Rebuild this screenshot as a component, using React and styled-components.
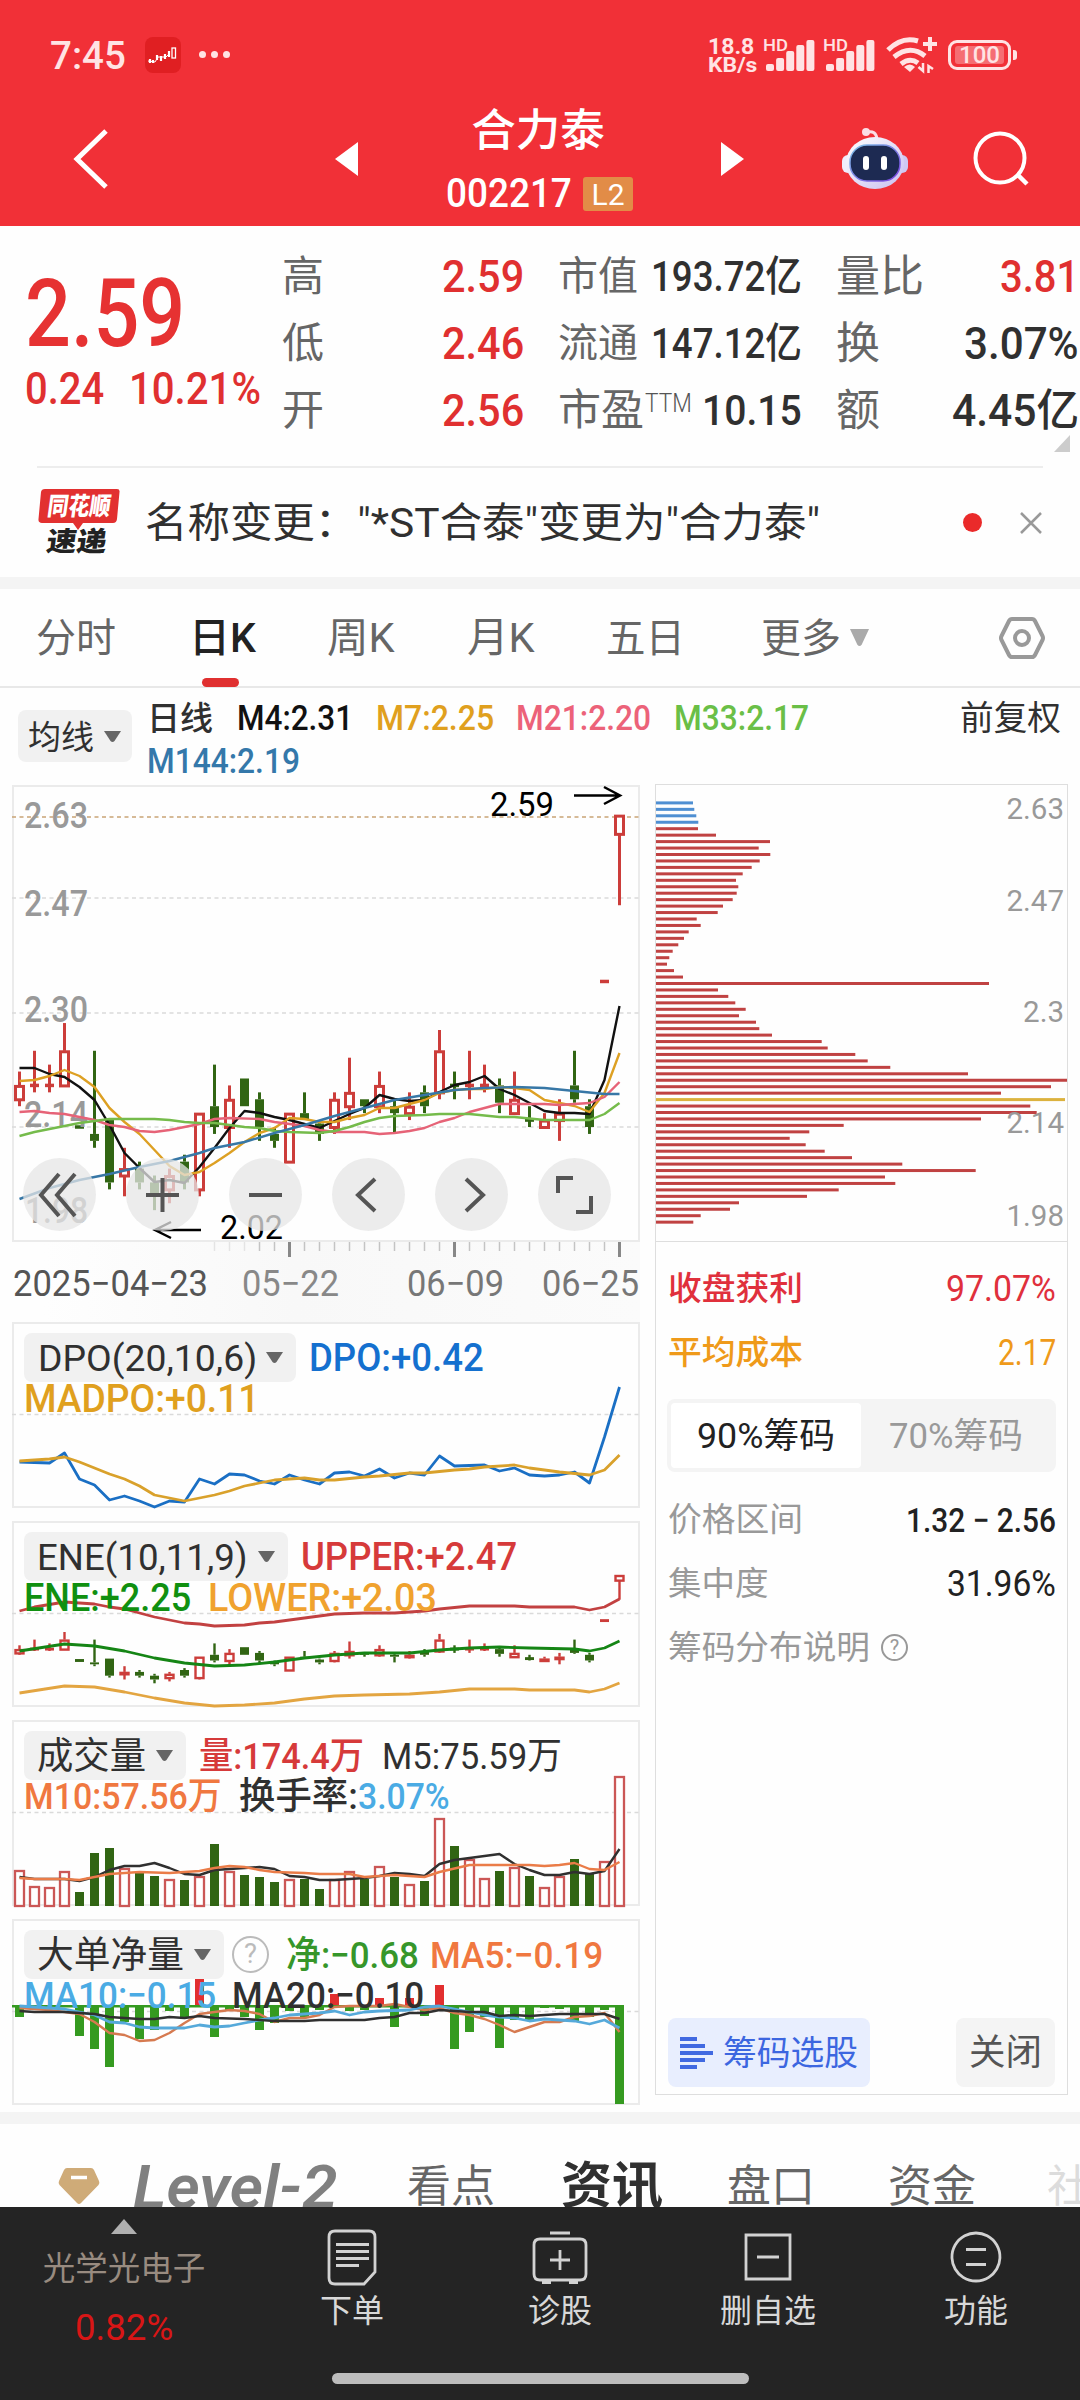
//-----------------------------------------------------------------------------
// Imports
//-----------------------------------------------------------------------------
import React, { useLayoutEffect, useRef, useState } from 'react'
import styled, { createGlobalStyle } from 'styled-components'

//-----------------------------------------------------------------------------
// Config
//-----------------------------------------------------------------------------
const colors = {
  BRAND: '#f13037',
  RISE: '#e03030',
  TEXT: '#303030',
  LABEL: '#666',
  CANDLE_UP: '#cc3d3a',
  CANDLE_DOWN: '#316513',
  GOLD: '#e0a01e',
  BLUE: '#1a6fc4',
  ORANGE: '#f07840',
  SKY: '#4aabe4',
  BORDER: '#ebebeb'
}

const FONT = 'Roboto, "Noto Sans CJK SC", sans-serif'

//-----------------------------------------------------------------------------
// Data
//-----------------------------------------------------------------------------
// [up, high, body top, body bottom, low] in cents
const CANDLES = [
  [1, 222, 220, 218, 217], [1, 225, 220, 220, 219], [1, 223, 220, 220, 219],
  [1, 229, 225, 220, 220], [0, 214, 214, 214, 214], [0, 225, 213, 212, 211],
  [0, 215, 215, 206, 205], [1, 211, 208, 207, 204], [0, 209, 208, 206, 205],
  [0, 207, 206, 204, 202], [1, 208, 207, 205, 203], [0, 210, 209, 206, 205],
  [1, 216, 216, 205, 204], [0, 223, 217, 214, 213], [1, 220, 218, 214, 211],
  [0, 221, 221, 217, 217], [0, 219, 218, 214, 212], [0, 214, 213, 212, 211],
  [1, 216, 216, 209, 209], [0, 219, 216, 215, 215], [0, 215, 214.5, 213, 212],
  [1, 219, 218, 214, 213], [1, 224, 219, 217, 215], [0, 218, 218, 217, 216],
  [1, 222, 220, 217, 216], [0, 218, 217, 216, 213], [1, 219, 217, 216, 215],
  [0, 220, 219, 217, 216], [1, 228, 225, 219, 218], [0, 222, 220, 220, 218],
  [1, 225, 220, 220, 218], [1, 223, 220, 220, 219], [0, 221, 220, 217.5, 216],
  [1, 222, 218, 216, 216], [0, 217, 215, 215, 214], [1, 216, 215, 214, 214],
  [1, 218, 216, 215, 212], [0, 225, 220, 218, 217.5], [0, 218, 217, 214, 213],
  [1, 235, 235, 235, 235], [1, 259, 259, 256.3, 246]
]

// sparse series: "index:y"
const MA4 = '0:283 1:283 2:289 3:292 4:302 5:315 6:340 7:368 8:383 9:397 10:395 11:398 12:382 13:363 14:343 15:326 16:328 17:332 18:335 19:339 20:343 21:336 22:329 23:323 24:310 25:314 26:316 27:315 28:307 29:300 30:297 31:291 32:304 33:310 34:318 35:326 36:328 37:328 38:329 39:295 40:221'
const MA7 = '0:296 1:295 2:291 3:285 4:291 5:302 6:323 7:337 8:349 9:365 10:381 11:390 12:387 13:378 14:368 15:357 16:348 17:343 18:333 19:334 20:337 21:337 22:333 23:330 24:323 25:323 26:319 27:315 28:308 29:305 30:304 31:304 32:302 33:303 34:305 35:315 36:318 37:321 38:327 39:308 40:268'
const MA21 = '0:327 1:326 2:328 3:329 4:332 5:335 6:340 7:342 8:346 9:347 10:345 11:342 12:339 13:334 14:333 16:334 17:337 18:339 19:341 20:345 21:347 23:347 24:349 25:348 26:346 27:343 28:337 29:333 30:327 31:323 32:319 33:319 35:319 36:320 37:319 38:318 39:312 40:297'
const MA33 = '0:351 1:347 2:344 3:341 4:338 5:336 6:334 7:334 9:334 10:335 11:337 12:338 13:338 14:340 15:342 16:343 17:346 18:347 20:348 21:346 22:342 23:337 24:333 25:331 27:330 28:329 30:329 32:332 33:332 35:335 36:335 38:335 39:329 40:318'
const MA144 = '0:414 2:403 4:395 6:389 8:382 10:376 12:368 13:363 15:357 17:348 19:340 21:331 23:323 25:315 27:310 29:305 31:303 33:302 35:303 37:306 39:309 40:309'

const DPO = '0:140 2:141 3:131 4:157 5:163 6:178 7:174 8:179 9:185 10:179 11:180 12:157 13:162 14:152 15:153 16:159 17:162 18:153 19:158 20:162 21:151 22:150 23:154 24:147 25:156 26:151 27:153 28:134 29:144 31:143 32:149 33:146 34:153 35:154 36:153 37:150 38:161 39:115 40:65'
const MADPO = '0:139 2:137 3:135 4:140 5:146 6:152 7:157 8:164 9:173 11:179 12:176 13:173 14:169 15:164 16:161 17:158 19:156 20:158 21:158 23:155 24:154 26:151 27:151 29:148 30:147 31:145 33:143 34:146 36:150 38:153 39:148 40:133'

const UPPER = '0:90 1:86 3:81 5:83 6:86 7:88 8:92 9:96 11:102 12:103 13:105 15:104 16:102 17:101 19:97 21:93 23:92 25:92 27:90 28:88 30:85 31:85 33:85 34:86 37:86 38:89 39:86 40:78'
const ENE = '0:130 3:123 5:125 7:130 9:137 11:142 13:145 15:144 17:141 19:137 21:134 23:132 26:132 28:129 30:127 32:126 34:127 37:128 38:130 39:127 40:120'
const LOWER = '0:172 3:165 5:166 7:171 9:177 11:182 13:185 15:184 17:182 19:178 21:175 23:174 26:173 28:171 30:168 33:168 34:169 37:169 38:171 39:168 40:162'

const VOLUMES = [36, 20, 19, 35, 14, 53, 58, 38, 33, 30, 27, 26, 30, 62, 35, 31, 29, 24, 27, 27, 17, 27, 35, 27, 40, 29, 22, 25, 88, 60, 47, 28, 35, 39, 30, 19, 30, 47, 32, 45, 130]
const VOL5 = '0:157 1:159 3:159 4:161 5:157 6:150 7:146 8:146 9:143 10:148 11:154 12:155 13:150 14:149 16:147 17:149 18:156 19:157 20:160 21:160 22:159 23:158 24:156 25:153 26:154 27:156 28:144 29:140 30:138 31:136 32:134 33:144 34:150 35:155 36:155 37:152 38:154 39:151 40:129'
const VOL10 = '0:158 1:159 3:159 4:160 5:157 6:154 8:152 10:153 12:151 13:148 14:146 15:147 16:150 17:152 19:153 20:154 22:154 23:157 24:156 25:155 26:156 27:157 28:152 30:145 32:145 34:145 35:146 36:145 37:143 38:149 39:150 40:142'

const NETS = [-11, -1, -1, -1, -30, -43, -61, -16, -33, -24, -5, -11, 31, -31, -5, -11, -24, -17, -5, -11, -4, 11, -5, -4, 7, -21, 7, -10, 20, -43, -26, -11, -42, -14, -15, -2, -3, -16, -11, -4, -98]
const NET5 = '0:89 2:91 3:93 4:95 5:103 6:114 7:116 8:122 9:121 10:114 11:104 12:95 13:93 14:91 15:92 16:95 17:103 18:99 19:99 20:96 21:88 22:87 24:87 25:85 26:88 27:91 28:89 29:94 30:96 31:100 32:106 33:113 34:108 35:103 36:103 37:98 38:97 39:94 40:113'
const NET10 = '0:87 3:90 4:93 5:96 6:103 7:104 8:108 9:109 11:109 12:106 13:108 14:107 15:104 16:101 17:99 18:96 19:95 20:94 21:92 22:96 23:93 24:92 26:91 27:88 28:87 29:90 30:93 31:96 32:98 33:99 34:102 35:100 37:102 38:105 39:101 40:109'
const NET20 = '0:92 1:93 3:93 4:94 5:95 6:98 8:100 9:100 10:98 11:99 12:97 13:99 15:100 17:102 19:102 20:101 23:101 24:99 25:98 26:94 27:94 28:91 29:92 30:93 31:93 32:97 33:96 34:97 36:95 39:95 40:100'

const CHIPS = [37, 38.3, 40.3, 42.3, 42, 60, 114, 102.7, 114.3, 103.7, 95.7, 86.7, 80, 82.3, 80.7, 76.7, 67, 61.7, 40.7, 44.7, 32.7, 28, 22.3, 16.7, 13.3, 11, 18, 27, 333, 62, 72.3, 79.3, 89.7, 83, 100, 103.3, 116, 165.7, 171.7, 199.3, 211.7, 234.3, 312, 411, 395, 345, 409, 374.3, 380.7, 325, 187.7, 153.3, 133.7, 149.7, 168.7, 196, 246.3, 319.7, 229, 239.3, 182.7, 151, 83, 74, 44.7, 37.3]

//-----------------------------------------------------------------------------
// Helpers
//-----------------------------------------------------------------------------
const x = i => 19.5 + 15 * i

const points = series =>
  series.split(' ').map(p => {
    const [i, y] = p.split(':')
    return `${ x(+i) },${ y }`
  }).join(' ')

// Squeezes or stretches its text horizontally to a fixed width
const Fit = ({ children, color, ml, size, w, weight }) => {
  const ref = useRef(null)
  const [scale, setScale] = useState(1)
  useLayoutEffect(() => {
    if (ref.current) setScale(w / ref.current.offsetWidth)
  }, [w, children])
  return (
    <FitBox $color={color} $ml={ml} $size={size} $w={w} $weight={weight}>
      <FitText ref={ref} style={{ transform: `scaleX(${ scale })` }}>{children}</FitText>
    </FitBox>
  )
}

//-----------------------------------------------------------------------------
// Chart parts
//-----------------------------------------------------------------------------
const Line = ({ color, series, width = 2.4 }) =>
  <polyline points={points(series)} fill='none' stroke={color} strokeWidth={width} strokeLinejoin='round' />

const Candles = ({ thick = 3, toY }) => CANDLES.map(([up, high, top, bottom, low], i) => {
  const color = up ? colors.CANDLE_UP : colors.CANDLE_DOWN
  const [h, t, b, l] = [high, top, bottom, low].map(toY)
  const flat = b - t < 1
  return (
    <g key={i} stroke={color} strokeWidth={thick}>
      {t > h && <line x1={x(i)} x2={x(i)} y1={h} y2={t} />}
      {l > b && <line x1={x(i)} x2={x(i)} y1={b} y2={l} />}
      {flat && <line x1={x(i) - 4.5} x2={x(i) + 4.5} y1={t} y2={t} strokeWidth={thick + 0.5} />}
      {!flat && up === 1 && <rect x={x(i) - 4} y={t + 1} width='8' height={Math.max(b - t - 0.5, 1)} fill='#fff' />}
      {!flat && up === 0 && <rect x={x(i) - 4.5} y={t} width='9' height={b - t} fill={color} stroke='none' />}
    </g>
  )
})

const Grid = ({ color = '#dadada', y }) =>
  <line x1='12' x2='640' y1={y} y2={y} stroke={color} strokeWidth='1.5' strokeDasharray='4 3.5' />

const ChartLabel = ({ children, color = '#999', size = 37, w, weight = 500, x: left, y }) =>
  <text x={left} y={y} fontSize={size} fontWeight={weight} fill={color} fontFamily={FONT} textLength={w} lengthAdjust='spacingAndGlyphs'>{children}</text>

const Caret = ({ color = '#666', h = 11, w = 17 }) =>
  <svg width={w} height={h} viewBox='0 0 17 11' preserveAspectRatio='none'><path d='M0 0H17L10.5 10Q8.500 12 6.500 10Z' fill={color} /></svg>

const Help = ({ color = '#bbb', size }) => (
  <HelpMark $color={color} $size={size}>?</HelpMark>
)

//-----------------------------------------------------------------------------
// Status bar and navigation
//-----------------------------------------------------------------------------
const Signal = () => (
  <svg width='52' height='38' viewBox='0 0 52 38'>
    <text x='0' y='14' fontSize='17' fontWeight='500' fill='#ffe3e4' fontFamily={FONT} textLength='25' lengthAdjust='spacingAndGlyphs'>HD</text>
    {[7, 13, 20, 26, 31].map((h, i) => (
      <rect key={i} x={3 + i * 10.1} y={34 - h} width='8' height={h} rx='2' fill='#ffe3e4' />
    ))}
  </svg>
)

const StatusBar = () => (
  <Status>
    <Fit size={39} w={76} ml={50}>7:45</Fit>
    <AppIcon>
      <svg width='36' height='36' viewBox='0 0 36 36'>
        <path d='M5 22V26M8 23V26M12 18V23M16 19V24M20 17V22M24 14V20' stroke='#fff' strokeWidth='2.200' />
        <path d='M3 24L10 25L13 20L21 20L25 16' stroke='#fff' strokeWidth='1' fill='none' />
        <rect x='27' y='11' width='3.500' height='10' fill='none' stroke='#fff' strokeWidth='1.300' />
      </svg>
    </AppIcon>
    <Dots><i /><i /><i /></Dots>
    <Speed>
      <Fit size={22} w={46} weight={700}>18.8</Fit>
      <Fit size={21} w={49} weight={700}>KB/s</Fit>
    </Speed>
    <Signals><Signal /><Signal /></Signals>
    <svg width='54' height='40' viewBox='884 34 54 40'>
      <g fill='none' stroke='#ffe3e4' strokeWidth='5'>
        <path d='M888 49Q902 35 918 40' />
        <path d='M894 56Q910 43 925 55' />
        <path d='M901 63Q910 56 918 62' />
        <path d='M923 43H937M930 36V50' strokeWidth='4' />
        <path d='M923 62V70L918.500 66M928.500 72V65L933 68' strokeWidth='2.500' />
      </g>
      <path d='M904 66Q910 61 915 66L910 71Z' fill='#ffe3e4' />
    </svg>
    <Battery><span>100</span></Battery>
    <BatteryTip />
  </Status>
)

const Robot = () => (
  <svg width='68' height='64' viewBox='0 0 68 64'>
    <defs>
      <linearGradient id='shell' x1='0' y1='0' x2='1' y2='1'>
        <stop offset='0' stopColor='#fff' /><stop offset='1' stopColor='#c9bff0' />
      </linearGradient>
      <linearGradient id='rim' x1='0' y1='0' x2='1' y2='1'>
        <stop offset='0' stopColor='#7fc4e8' /><stop offset='1' stopColor='#7a3fe0' />
      </linearGradient>
    </defs>
    <circle cx='25' cy='5' r='4' fill='#fbdde6' />
    <path d='M26 5Q35 3 36 12' fill='none' stroke='#fbdde6' strokeWidth='3' />
    <rect x='1' y='28' width='12' height='18' rx='6' fill='#f0ecfc' />
    <rect x='55' y='28' width='12' height='18' rx='6' fill='#cfc8f2' />
    <ellipse cx='34' cy='36' rx='29' ry='26' fill='url(#shell)' />
    <rect x='9' y='18' width='50' height='36' rx='17' fill='#1d2a52' stroke='url(#rim)' strokeWidth='1.500' />
    <rect x='22' y='29' width='6' height='14' rx='3' fill='#fff' />
    <rect x='40' y='29' width='6' height='14' rx='3' fill='#fff' />
  </svg>
)

const NavBar = () => (
  <Nav>
    <BackIcon width='36' height='62' viewBox='0 0 36 62'>
      <path d='M33 3L4 31L33 59' fill='none' stroke='#fff' strokeWidth='5' />
    </BackIcon>
    <PrevIcon width='23' height='34' viewBox='0 0 23 34'><path d='M23 0V34L0 17Z' fill='#fff' /></PrevIcon>
    <TitleBlock>
      <StockName>合力泰</StockName>
      <CodeRow>
        <Fit size={41} w={126}>002217</Fit>
        <LevelBadge><Fit size={30} w={33} weight={400}>L2</Fit></LevelBadge>
      </CodeRow>
    </TitleBlock>
    <svg width='23' height='34' viewBox='0 0 23 34'><path d='M0 0V34L23 17Z' fill='#fff' /></svg>
    <RobotSlot><Robot /></RobotSlot>
    <SearchIcon width='60' height='58' viewBox='0 0 60 58'>
      <circle cx='28' cy='28' r='24.500' fill='none' stroke='#fff' strokeWidth='4' />
      <path d='M45 44L55 54' stroke='#fff' strokeWidth='4.500' />
    </SearchIcon>
  </Nav>
)

//-----------------------------------------------------------------------------
// Quote
//-----------------------------------------------------------------------------
const QuoteBoard = () => (
  <Quote>
    <PriceBlock>
      <Fit size={95} w={160} color='#e63232'>2.59</Fit>
      <ChangeRow>
        <Fit size={45} w={79} color={colors.RISE}>0.24</Fit>
        <Fit size={45} w={132} ml={25} color={colors.RISE}>10.21%</Fit>
      </ChangeRow>
    </PriceBlock>
    <QuoteColumn $w={242}>
      <QuoteRow><QuoteLabel>高</QuoteLabel><Fit size={45} w={82} color={colors.RISE}>2.59</Fit></QuoteRow>
      <QuoteRow><QuoteLabel>低</QuoteLabel><Fit size={45} w={82} color={colors.RISE}>2.46</Fit></QuoteRow>
      <QuoteRow><QuoteLabel>开</QuoteLabel><Fit size={45} w={82} color={colors.RISE}>2.56</Fit></QuoteRow>
    </QuoteColumn>
    <QuoteColumn $w={244} $ml={34}>
      <QuoteRow><QuoteLabel $size={40}>市值</QuoteLabel><Fit size={42} w={151}>193.72亿</Fit></QuoteRow>
      <QuoteRow><QuoteLabel $size={40}>流通</QuoteLabel><Fit size={42} w={151}>147.12亿</Fit></QuoteRow>
      <QuoteRow><QuoteLabel $size={43}>市盈</QuoteLabel><Sup><Fit size={25} w={47} weight={300} color='#555'>TTM</Fit></Sup><Fit size={43} w={100}>10.15</Fit></QuoteRow>
    </QuoteColumn>
    <QuoteColumn $w={243} $ml={34}>
      <QuoteRow><QuoteLabel $size={44}>量比</QuoteLabel><Fit size={45} w={79} color={colors.RISE}>3.81</Fit></QuoteRow>
      <QuoteRow><QuoteLabel $size={44}>换</QuoteLabel><Fit size={44} w={115}>3.07%</Fit></QuoteRow>
      <QuoteRow><QuoteLabel $size={44}>额</QuoteLabel><Fit size={44} w={127}>4.45亿</Fit></QuoteRow>
      <Corner />
    </QuoteColumn>
  </Quote>
)

const NoticeBar = () => (
  <Notice>
    <svg width='86' height='70' viewBox='36 488 86 70'>
      <path d='M45 489H117Q120 489 119.500 492L117 519Q116.500 523 113 523H83L78 530L73 523H42Q38 523 38.500 519L41 492Q41.500 489 45 489Z' fill='#e23030' />
      <g fontFamily={FONT} fontWeight='900' transform='skewX(-8)'>
        <text x='119' y='515' fontSize='25' fill='#fff' textLength='63' lengthAdjust='spacingAndGlyphs'>同花顺</text>
        <text x='123' y='551' fontSize='27' fill='#222' textLength='60' lengthAdjust='spacingAndGlyphs'>速递</text>
      </g>
    </svg>
    <Fit size={41} w={675} ml={23} weight={400}>{'名称变更："*ST合泰"变更为"合力泰"'}</Fit>
    <NoticeDot />
    <svg width='24' height='24' viewBox='0 0 24 24'><path d='M2 2L22 22M22 2L2 22' stroke='#999' strokeWidth='2.500' /></svg>
  </Notice>
)

//-----------------------------------------------------------------------------
// Period tabs and averages
//-----------------------------------------------------------------------------
const PeriodTabs = () => (
  <Tabs>
    <Fit size={40} w={80} ml={36} weight={400} color='#666'>分时</Fit>
    <ActiveTab><Fit size={41} w={67} color='#222'>日K</Fit></ActiveTab>
    <Fit size={41} w={68} ml={71} weight={400} color='#666'>周K</Fit>
    <Fit size={41} w={68} ml={72} weight={400} color='#666'>月K</Fit>
    <Fit size={40} w={79} ml={71} weight={400} color='#666'>五日</Fit>
    <Fit size={40} w={80} ml={76} weight={400} color='#666'>更多</Fit>
    <MoreCaret><Caret color='#aaa' w={19} h={17} /></MoreCaret>
    <GearIcon width='46' height='44' viewBox='0 0 46 44'>
      <path d='M13 3H33Q35 3 36 5L43.500 20Q44.500 22 43.500 24L36 39Q35 41 33 41H13Q11 41 10 39L2.500 24Q1.500 22 2.500 20L10 5Q11 3 13 3Z' fill='none' stroke='#999' strokeWidth='4' />
      <circle cx='23' cy='22' r='7' fill='none' stroke='#999' strokeWidth='4' />
    </GearIcon>
  </Tabs>
)

const Averages = () => (
  <AverageBar>
    <AverageButton><Fit size={33} w={66} weight={400}>均线</Fit><Caret /></AverageButton>
    <AverageLines>
      <LegendRow>
        <Fit size={33} w={66}>日线</Fit>
        <Fit size={35} w={116} ml={24} color='#111'>M4:2.31</Fit>
        <Fit size={35} w={118} ml={23} color='#e0a01e'>M7:2.25</Fit>
        <Fit size={35} w={135} ml={22} color='#ec6279'>M21:2.20</Fit>
        <Fit size={35} w={135} ml={23} color='#6abf47'>M33:2.17</Fit>
      </LegendRow>
      <LegendRow><Fit size={35} w={153} color='#3478aa'>M144:2.19</Fit></LegendRow>
    </AverageLines>
    <Fit size={34} w={101} weight={400}>前复权</Fit>
  </AverageBar>
)

//-----------------------------------------------------------------------------
// Main chart
//-----------------------------------------------------------------------------
const mainY = cents => 342 + (214 - cents) * 6.93

const TOOL_ICONS = [
  'M36 16L18 37L36 58M52 16L34 37L52 58',
  'M20 37H53M36.500 20V54',
  'M20 37H53',
  'M43 21L26 37L43 53',
  'M31 21L48 37L31 53',
  'M20 35V20H35M53 38V54H38'
]

const MainChart = () => (
  <ChartBox $h={457}>
    <svg width='628' height='457' viewBox='12 0 628 457'>
      <Grid y={32} color='#c9a476' />
      <Grid y={113} /><Grid y={228} /><Grid y={342} />
      <Candles toY={mainY} />
      <ChartLabel x={24} y={43} w={64}>2.63</ChartLabel>
      <ChartLabel x={24} y={131} w={64}>2.47</ChartLabel>
      <ChartLabel x={24} y={237} w={64}>2.30</ChartLabel>
      <ChartLabel x={24} y={342} w={64}>2.14</ChartLabel>
      <ChartLabel x={25} y={438} w={63}>1.98</ChartLabel>
      <Line series={MA4} color='#111' />
      <Line series={MA7} color='#dda023' />
      <Line series={MA21} color='#e66377' />
      <Line series={MA33} color='#75bb4b' />
      <Line series={MA144} color='#3777a6' />
      <ChartLabel x={490} y={31} w={64} size={33} weight={400} color='#000'>2.59</ChartLabel>
      <ChartLabel x={220} y={454} w={63} size={33} weight={400} color='#000'>2.02</ChartLabel>
      <path d='M574 10.500H619M604 2L620 10.500L604 19' fill='none' stroke='#000' strokeWidth='2.500' />
      <path d='M201 445H156M171 437L155 445L171 453' fill='none' stroke='#000' strokeWidth='2.500' />
    </svg>
    <Toolbar>
      {TOOL_ICONS.map(d => (
        <Tool key={d}>
          <svg width='73' height='73' viewBox='0 0 73 73'><path d={d} fill='none' stroke='#555' strokeWidth='4' /></svg>
        </Tool>
      ))}
    </Toolbar>
  </ChartBox>
)

const TimeAxis = () => (
  <AxisBox>
    <svg width='628' height='80' viewBox='12 0 628 80'>
      {CANDLES.map((_, i) => {
        if (i < 13) return null
        const major = i === 18 || i === 29 || i === 40
        return <line key={i} x1={x(i)} x2={x(i)} y1='0' y2={major ? 15 : 9} stroke={major ? '#888' : i < 16 ? '#e4e4e4' : '#c4c4c4'} strokeWidth={major ? 3 : 1.5} />
      })}
      <ChartLabel x={13} y={54} w={195} size={36} weight={400} color='#555'>2025−04−23</ChartLabel>
      <ChartLabel x={242} y={54} w={97} size={36} weight={400} color='#888'>05−22</ChartLabel>
      <ChartLabel x={407} y={54} w={97} size={36} weight={400} color='#777'>06−09</ChartLabel>
      <ChartLabel x={542} y={54} w={97} size={36} weight={400} color='#777'>06−25</ChartLabel>
    </svg>
  </AxisBox>
)

//-----------------------------------------------------------------------------
// Indicator panels
//-----------------------------------------------------------------------------
const Indicator = ({ children, first, name, nameWidth, second }) => (
  <ChartBox $h={186}>
    <svg width='628' height='186' viewBox='12 0 628 186'>
      <Grid y={92.5} />
      {children}
    </svg>
    <Legends>
      <LegendRow $h={49}>
        <IndicatorButton><Fit size={37} w={nameWidth} weight={400}>{name}</Fit><Caret /></IndicatorButton>
        {first}
      </LegendRow>
      <LegendRow $h={32}>{second}</LegendRow>
    </Legends>
  </ChartBox>
)

const eneY = cents => 54 + (259 - cents) * 1.9

const Indicators = () => (
  <>
    <Indicator
      name='DPO(20,10,6)'
      nameWidth={219}
      first={<Fit size={38} w={175} ml={13} color='#1470cf'>DPO:+0.42</Fit>}
      second={<Fit size={38} w={235} color={colors.GOLD}>MADPO:+0.11</Fit>}>
      <Line series={DPO} color={colors.BLUE} width={2.8} />
      <Line series={MADPO} color='#d9a12b' width={2.8} />
    </Indicator>
    <Indicator
      name='ENE(10,11,9)'
      nameWidth={211}
      first={<Fit size={38} w={216} ml={13} color='#d63a3a'>UPPER:+2.47</Fit>}
      second={<><Fit size={38} w={167} color='#109010'>ENE:+2.25</Fit><Fit size={38} w={229} ml={17} color='#f0a22e'>LOWER:+2.03</Fit></>}>
      <Candles toY={eneY} thick={2.4} />
      <Line series={UPPER} color='#c24141' width={2.8} />
      <Line series={ENE} color='#158515' width={2.8} />
      <Line series={LOWER} color='#e3a541' width={2.8} />
    </Indicator>
    <Indicator
      name='成交量'
      nameWidth={109}
      first={<><Fit size={37} w={165} ml={13} color='#d63a3a'>量:174.4万</Fit><Fit size={37} w={180} ml={18} weight={400}>M5:75.59万</Fit></>}
      second={<><Fit size={37} w={198} color={colors.ORANGE}>M10:57.56万</Fit><Fit size={37} w={119} ml={17}>换手率:</Fit><Fit size={37} w={92} color={colors.SKY}>3.07%</Fit></>}>
      {VOLUMES.map((v, i) => CANDLES[i][0]
        ? <rect key={i} x={x(i) - 4.5} y={187 - v} width='9' height={v - 1} fill='#fff' stroke='#cb5756' strokeWidth='2.300' />
        : <rect key={i} x={x(i) - 4.5} y={186 - v} width='9' height={v} fill={colors.CANDLE_DOWN} />)}
      <Line series={VOL5} color='#303030' />
      <Line series={VOL10} color='#ea7c48' />
    </Indicator>
    <Indicator
      name='大单净量'
      nameWidth={147}
      first={<><HelpSlot><Help size={37} /></HelpSlot><Fit size={37} w={133} ml={17} color='#36962a'>净:−0.68</Fit><Fit size={37} w={173} ml={11} color={colors.ORANGE}>MA5:−0.19</Fit></>}
      second={<><Fit size={37} w={192} color={colors.SKY}>MA10:−0.15</Fit><Fit size={37} w={192} ml={16}>MA20:−0.10</Fit></>}>
      <rect x='12' y='86' width='612' height='2.500' fill='#359a20' />
      {NETS.map((n, i) => (
        <rect key={i} x={x(i) - 4.5} y={n > 0 ? 86 - n : 87} width='9' height={Math.abs(n)} fill={n > 0 ? '#e22f2f' : '#359a20'} />
      ))}
      <Line series={NET5} color='#d67a50' />
      <Line series={NET10} color='#55a9da' width={2.8} />
      <Line series={NET20} color='#303030' />
    </Indicator>
  </>
)

//-----------------------------------------------------------------------------
// Chip distribution
//-----------------------------------------------------------------------------
const chipColor = i => i < 4 ? '#4f8fd2' : i === 46 ? '#dcb23e' : '#c04242'

const ChipLabel = ({ children, y }) =>
  <text x='409' y={y} fontSize='29.500' fontFamily={FONT} fill='#999' textAnchor='end'>{children}</text>

const ChipPanel = () => (
  <ChipBox>
    <svg width='413' height='457' viewBox='0 0 413 457'>
      {CHIPS.map((w, i) => <rect key={i} x='1' y={17.4 + i * 6.45} width={w} height='3' fill={chipColor(i)} />)}
      <ChipLabel y={35}>2.63</ChipLabel>
      <ChipLabel y={127}>2.47</ChipLabel>
      <ChipLabel y={238}>2.3</ChipLabel>
      <ChipLabel y={349}>2.14</ChipLabel>
      <ChipLabel y={442}>1.98</ChipLabel>
    </svg>
    <ChipStats>
      <StatRow><Fit size={33.5} w={135} color='#e0303c'>收盘获利</Fit><Fit size={36} w={110} weight={400} color='#e0303c'>97.07%</Fit></StatRow>
      <StatRow><Fit size={33.5} w={135} color='#ef9a1a'>平均成本</Fit><Fit size={36} w={58} weight={400} color='#ef9a1a'>2.17</Fit></StatRow>
      <Toggle>
        <ToggleItem $active><Fit size={35} w={138} weight={400} color='#222'>90%筹码</Fit></ToggleItem>
        <ToggleItem><Fit size={35} w={134} weight={400} color='#999'>70%筹码</Fit></ToggleItem>
      </Toggle>
      <StatRow><Fit size={33.5} w={135} weight={400} color='#999'>价格区间</Fit><Fit size={34} w={150} color='#222'>1.32 − 2.56</Fit></StatRow>
      <StatRow><Fit size={33.5} w={101} weight={400} color='#999'>集中度</Fit><Fit size={36} w={109} weight={400} color='#222'>31.96%</Fit></StatRow>
      <StatRow $start><Fit size={33.5} w={202} weight={400} color='#999'>筹码分布说明</Fit><Help size={27} color='#999' /></StatRow>
    </ChipStats>
    <ChipActions>
      <PickButton>
        <svg width='34' height='32' viewBox='0 0 34 32'>
          <path d='M0 2H17M0 9H25M0 16H33M0 23H25M0 30H17' stroke='#4169e1' strokeWidth='4' />
        </svg>
        <Fit size={34} w={135} weight={400} color='#3c66e0'>筹码选股</Fit>
      </PickButton>
      <CloseButton><Fit size={36} w={73} weight={400} color='#555'>关闭</Fit></CloseButton>
    </ChipActions>
  </ChipBox>
)

//-----------------------------------------------------------------------------
// Bottom
//-----------------------------------------------------------------------------
const SectionTabs = () => (
  <Sections>
    <svg width='42' height='38' viewBox='0 0 42 38'>
      <path d='M9 1H33Q35 1 36 3L41 14Q42 16 40.500 18L23 36Q21 38 19 36L1.500 18Q0 16 1 14L6 3Q7 1 9 1Z' fill='#cfab78' />
      <path d='M13 10.500H29' stroke='#fff' strokeWidth='3.500' />
    </svg>
    <LevelLogo><Fit size={60} w={204} weight={600} color='#808080'>Level‑2</Fit></LevelLogo>
    <Fit size={44} w={88} ml={70} weight={400} color='#666'>看点</Fit>
    <Fit size={50} w={102} ml={66} weight={700}>资讯</Fit>
    <Fit size={44} w={88} ml={64} weight={400} color='#666'>盘口</Fit>
    <Fit size={44} w={88} ml={73} weight={400} color='#666'>资金</Fit>
    <Fit size={44} w={44} ml={71} weight={400} color='#dcdcdc'>社</Fit>
  </Sections>
)

const ACTIONS = [
  ['下单', <path d='M11 3H45Q51 3 51 9V44L40 56H11Q5 56 5 50V9Q5 3 11 3ZM12 16.500H45M12 23.500H45M12 30.500H45M12 37.500H35' />],
  ['诊股', <path d='M18 5H38M8 11H48Q54 11 54 17V46Q54 52 48 52H8Q2 52 2 46V17Q2 11 8 11ZM28 22V42M18 32H38M10 54.500H19M37 54.500H46' />],
  ['删自选', <path d='M6 7H50V51H6ZM17 29H39' />],
  ['功能', <path d='M28 5A24 24 0 1 1 27.900 5ZM18 21.500H38M18 36.500H38' />]
]

const BottomBar = () => (
  <Bottom>
    <BottomRow>
      <IndexCell>
        <svg width='26' height='15' viewBox='0 0 26 15'><path d='M0 15H26L13 0Z' fill='#b0b0b0' /></svg>
        <IndexName>光学光电子</IndexName>
        <Fit size={37} w={98} weight={400} color='#d81616'>0.82%</Fit>
      </IndexCell>
      {ACTIONS.map(([label, icon]) => (
        <Action key={label}>
          <svg width='56' height='60' viewBox='0 0 56 60' fill='none' stroke='#d2d2d2' strokeWidth='2.800'>{icon}</svg>
          <span>{label}</span>
        </Action>
      ))}
    </BottomRow>
    <HomeBar />
  </Bottom>
)

//-----------------------------------------------------------------------------
// Component
//-----------------------------------------------------------------------------
const App = () => (
  <Page>
    <GlobalStyle />
    <Header><StatusBar /><NavBar /></Header>
    <QuoteBoard />
    <Divider />
    <NoticeBar />
    <Band />
    <PeriodTabs />
    <Averages />
    <Charts>
      <ChartColumn>
        <MainChart />
        <TimeAxis />
        <PanelStack><Indicators /></PanelStack>
      </ChartColumn>
      <ChipPanel />
    </Charts>
    <Band />
    <SectionTabs />
    <BottomBar />
  </Page>
)

//-----------------------------------------------------------------------------
// Styled Components
//-----------------------------------------------------------------------------
const GlobalStyle = createGlobalStyle`
  * { box-sizing: border-box; }
  body { margin: 0; background: #fff; }
  svg { display: block; flex: none; overflow: visible; }
`

const Page = styled.div`
  width: 1080px;
  height: 2400px;
  overflow: hidden;
  display: flex;
  flex-direction: column;
  background: #fefefe;
  color: ${ colors.TEXT };
  font-family: ${ FONT };
`

const FitBox = styled.span`
  display: block;
  flex: none;
  width: ${ p => p.$w }px;
  margin-left: ${ p => p.$ml || 0 }px;
  padding-top: 3px;
  line-height: 1.15;
  font-size: ${ p => p.$size }px;
  font-weight: ${ p => p.$weight || 500 };
  color: ${ p => p.$color || 'inherit' };
`

const FitText = styled.span`
  display: inline-block;
  vertical-align: top;
  white-space: nowrap;
  transform-origin: left center;
`

const HelpMark = styled.span`
  display: flex;
  align-items: center;
  justify-content: center;
  width: ${ p => p.$size }px;
  height: ${ p => p.$size }px;
  border: 2.5px solid ${ p => p.$color };
  border-radius: 50%;
  color: ${ p => p.$color };
  font-size: ${ p => p.$size * 0.74 }px;
  line-height: 1;
`

const Header = styled.header`
  flex: none;
  height: 226px;
  background: ${ colors.BRAND };
  color: #fff;
`

const Status = styled.div`
  display: flex;
  align-items: center;
  height: 104px;
  padding-top: 5px;
  color: #ffe3e4;
`

const AppIcon = styled.div`
  width: 36px;
  height: 36px;
  margin-left: 19px;
  border-radius: 8px;
  background: #e01f22;
`

const Dots = styled.div`
  display: flex;
  gap: 5px;
  margin-left: 18px;
  i {
    width: 7px;
    height: 7px;
    border-radius: 50%;
    background: #ffe3e4;
  }
`

const Speed = styled.div`
  display: flex;
  flex-direction: column;
  margin: 2px 0 0 478px;
  ${ FitBox } {
    padding: 0;
    line-height: 19px;
  }
`

const Signals = styled.div`
  display: flex;
  gap: 8px;
  margin: 2px 9px 0 6px;
`

const Battery = styled.div`
  width: 63px;
  height: 30px;
  margin-left: 10px;
  padding: 3px 4px;
  border: 3px solid #ffe3e4;
  border-radius: 9px;
  span {
    display: block;
    border-radius: 3px;
    background: rgba(255, 255, 255, 0.3);
    font-size: 24px;
    font-weight: 500;
    line-height: 18px;
    text-align: center;
  }
`

const BatteryTip = styled.div`
  width: 4px;
  height: 10px;
  margin-left: 2px;
  border-radius: 0 3px 3px 0;
  background: #ffe3e4;
`

const Nav = styled.nav`
  display: flex;
  align-items: center;
  height: 109px;
`

const BackIcon = styled.svg`
  margin-left: 73px;
`

const PrevIcon = styled.svg`
  margin-left: 226px;
`

const TitleBlock = styled.div`
  display: flex;
  flex-direction: column;
  align-items: center;
  width: 363px;
  margin-top: 5px;
`

const StockName = styled.div`
  padding-right: 3px;
  font-size: 44.5px;
  font-weight: 500;
  line-height: 66px;
`

const CodeRow = styled.div`
  display: flex;
  align-items: center;
  gap: 11px;
  height: 61px;
  > ${ FitBox } {
    padding-top: 0;
  }
`

const LevelBadge = styled.div`
  display: flex;
  align-items: center;
  justify-content: center;
  width: 50px;
  height: 34px;
  border-radius: 3px;
  background: #e28c47;
`

const RobotSlot = styled.div`
  margin: 0 0 0 97px;
`

const SearchIcon = styled.svg`
  margin-left: 63px;
`

const Quote = styled.section`
  display: flex;
  flex: none;
  height: 240px;
  padding-top: 16px;
`

const PriceBlock = styled.div`
  display: flex;
  flex-direction: column;
  width: 282px;
  padding: 20px 0 0 25px;
  > ${ FitBox } {
    line-height: 98px;
  }
`

const ChangeRow = styled.div`
  display: flex;
  margin-top: -3px;
`

const QuoteColumn = styled.div`
  width: ${ p => p.$w }px;
  margin-left: ${ p => p.$ml || 0 }px;
`

const QuoteRow = styled.div`
  display: flex;
  align-items: center;
  justify-content: space-between;
  height: 67px;
`

const QuoteLabel = styled.span`
  padding-top: 3px;
  color: ${ colors.LABEL };
  font-size: ${ p => p.$size || 42 }px;
  line-height: 1.15;
  white-space: nowrap;
`

const Sup = styled.div`
  margin: -14px auto 0 1px;
`

const Corner = styled.div`
  width: 16px;
  height: 17px;
  margin: -8px 9px 0 auto;
  background: #ccc;
  clip-path: polygon(100% 0, 100% 100%, 0 100%);
`

const Divider = styled.div`
  flex: none;
  height: 2px;
  margin: 0 37px;
  background: #ededed;
`

const Notice = styled.section`
  display: flex;
  align-items: center;
  flex: none;
  height: 109px;
  padding: 0 37px 0 36px;
`

const NoticeDot = styled.div`
  width: 19px;
  height: 19px;
  margin: 0 37px 0 auto;
  border-radius: 50%;
  background: #ea2a2a;
`

const Band = styled.div`
  flex: none;
  height: 12px;
  background: #f4f4f4;
`

const Tabs = styled.nav`
  display: flex;
  align-items: center;
  flex: none;
  height: 99px;
  border-bottom: 2px solid #e8e8e8;
`

const ActiveTab = styled.div`
  display: flex;
  flex-direction: column;
  align-items: center;
  justify-content: center;
  height: 100%;
  margin-left: 73px;
  &::after {
    content: '';
    width: 37px;
    height: 9px;
    margin: 15px 4px -24px 0;
    border-radius: 5px;
    background: ${ colors.RISE };
  }
`

const MoreCaret = styled.div`
  margin-left: 9px;
`

const GearIcon = styled.svg`
  margin: 0 35px 0 auto;
`

const AverageBar = styled.div`
  display: flex;
  align-items: flex-start;
  flex: none;
  height: 96px;
  padding: 8px 19px 0 18px;
`

const AverageButton = styled.button`
  display: flex;
  align-items: center;
  gap: 10px;
  width: 114px;
  height: 52px;
  margin-top: 14px;
  padding: 0 10px;
  border: 0;
  border-radius: 8px;
  background: #f1f1f1;
  color: ${ colors.TEXT };
  font-family: inherit;
`

const AverageLines = styled.div`
  flex: 1;
  margin-left: 15px;
`

const LegendRow = styled.div`
  display: flex;
  align-items: center;
  height: ${ p => p.$h || 43 }px;
`

const Charts = styled.section`
  display: flex;
  align-items: flex-start;
  flex: none;
  gap: 15px;
  height: 1328px;
  padding-left: 12px;
`

const ChartColumn = styled.div`
  width: 628px;
  padding-top: 1px;
`

const ChartBox = styled.div`
  display: grid;
  height: ${ p => p.$h }px;
  box-shadow: inset 0 0 0 2px ${ colors.BORDER };
  > * {
    grid-area: 1 / 1;
  }
`

const Toolbar = styled.div`
  display: flex;
  gap: 30px;
  padding: 373px 0 0 11px;
`

const Tool = styled.button`
  width: 73px;
  height: 73px;
  padding: 0;
  border: 0;
  border-radius: 50%;
  background: rgba(230, 230, 230, 0.75);
`

const AxisBox = styled.div`
  height: 80px;
  background: linear-gradient(to right, #fefefe 5%, #f8f8f8 45%, #fbfbfb);
`

const PanelStack = styled.div`
  display: flex;
  flex-direction: column;
  gap: 13px;
`

const Legends = styled.div`
  padding: 11px 0 0 12px;
`

const IndicatorButton = styled.button`
  display: flex;
  align-items: center;
  gap: 10px;
  height: 49px;
  padding: 0 13px;
  border: 0;
  border-radius: 8px;
  background: #f1f1f1;
  color: ${ colors.TEXT };
  font-family: inherit;
`

const HelpSlot = styled.div`
  margin-left: 8px;
`

const ChipBox = styled.aside`
  display: flex;
  flex-direction: column;
  width: 413px;
  height: 1311px;
  box-shadow: inset 0 0 0 1px #dedede;
`

const ChipStats = styled.div`
  flex: 1;
  padding: 14px 12px 0 13px;
  border-top: 1px solid #dedede;
`

const StatRow = styled.div`
  display: flex;
  align-items: center;
  justify-content: ${ p => p.$start ? 'flex-start' : 'space-between' };
  gap: 11px;
  height: 64px;
`

const Toggle = styled.div`
  display: flex;
  height: 73px;
  margin: 15px 0 15px -1px;
  padding: 4px;
  border-radius: 8px;
  background: #f4f4f4;
`

const ToggleItem = styled.div`
  display: flex;
  align-items: center;
  justify-content: center;
  width: 190px;
  border-radius: 4px;
  background: ${ p => p.$active ? '#fff' : 'transparent' };
`

const ChipActions = styled.div`
  display: flex;
  justify-content: space-between;
  padding: 0 13px 8px;
`

const PickButton = styled.button`
  display: flex;
  align-items: center;
  gap: 9px;
  width: 202px;
  height: 69px;
  padding: 0 12px;
  border: 0;
  border-radius: 8px;
  background: #e8eefe;
  font-family: inherit;
`

const CloseButton = styled.button`
  display: flex;
  align-items: center;
  justify-content: center;
  width: 99px;
  height: 69px;
  padding: 0;
  border: 0;
  border-radius: 8px;
  background: #f4f4f4;
  font-family: inherit;
`

const Sections = styled.nav`
  display: flex;
  align-items: center;
  flex: none;
  height: 83px;
  padding: 40px 0 0 58px;
  overflow: hidden;
`

const LevelLogo = styled.div`
  margin-left: 33px;
  font-style: italic;
`

const Bottom = styled.footer`
  flex: none;
  height: 193px;
  background: #242424;
`

const BottomRow = styled.div`
  display: flex;
  height: 166px;
  padding-left: 26px;
`

const IndexCell = styled.div`
  display: flex;
  flex-direction: column;
  align-items: center;
  width: 196px;
  padding-top: 12px;
`

const IndexName = styled.div`
  height: 70px;
  padding-top: 1px;
  color: #988b80;
  font-size: 32.5px;
  line-height: 68px;
`

const Action = styled.div`
  display: flex;
  flex-direction: column;
  align-items: center;
  gap: 3px;
  width: 208px;
  padding-top: 21px;
  color: #d8d8d8;
  font-size: 32px;
  line-height: 40px;
  &:nth-child(2) {
    margin-left: 26px;
  }
`

const HomeBar = styled.div`
  width: 417px;
  height: 11px;
  margin: 0 auto;
  border-radius: 6px;
  background: #bdbdbd;
`

export default App
